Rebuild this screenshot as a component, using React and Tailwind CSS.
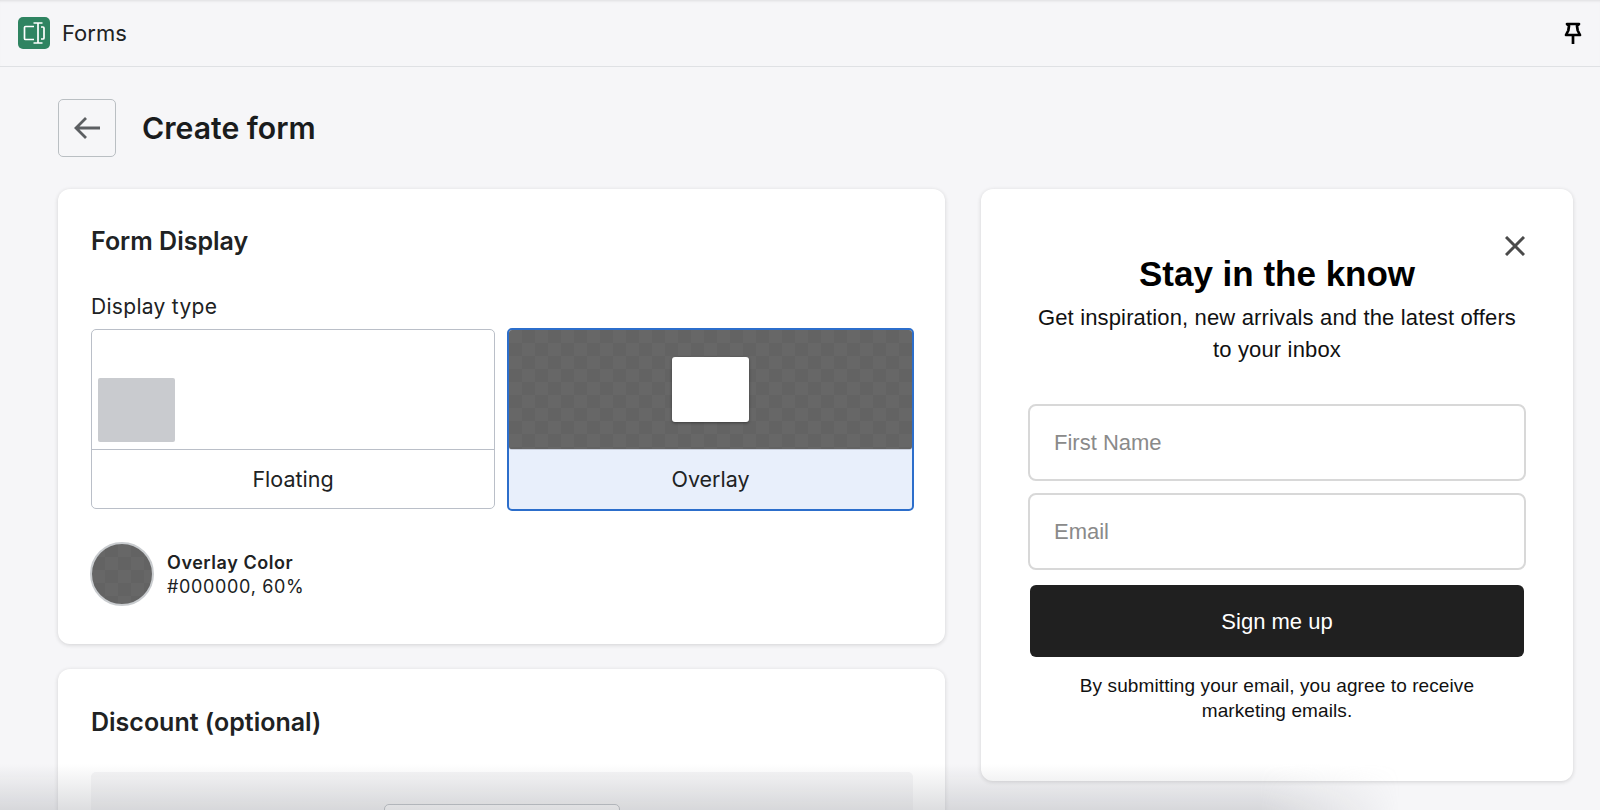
const checker = 'bg-[repeating-conic-gradient(#636363_0%_25%,#676767_0%_50%)] bg-[length:26px_26px]';

function Logo() {
  return (
    <div className="w-8 h-8 rounded-[5px] bg-[#2f8461]">
      <svg width="32" height="32" viewBox="0 0 32 32" fill="none" stroke="#fff" strokeWidth="1.7">
        <path d="M16 9.500H7.500a1 1 0 0 0-1 1v11a1 1 0 0 0 1 1H16" />
        <path d="M15.500 6h9M15.500 26h9M20 6v20" />
        <path d="M23 10h2a1 1 0 0 1 1 1v10a1 1 0 0 1-1 1h-2" />
      </svg>
    </div>
  );
}

function Pin() {
  return (
    <svg width="18" height="23" viewBox="0 0 18 23" fill="none" stroke="#000" strokeWidth="2.7" strokeLinejoin="round">
      <path d="M3 2h12l-2 2 .7 4.500L16 13H2l2.300-4.500L5 4z" />
      <path d="M9 13v9" />
    </svg>
  );
}

function DisplayOption({ label, selected }) {
  if (selected) {
    return (
      <div className="w-[407px] h-[183px] rounded-[5px] border-2 border-[#2c6ecb] bg-[#e8effb] overflow-hidden flex flex-col">
        <div className={`h-[120px] shrink-0 border-b border-[#c9cfdc] rounded-b-[3px] flex items-center justify-center ${checker}`}>
          <div className="w-[77px] h-[65px] bg-white rounded-[3px] shadow-[0_1px_3px_rgba(0,0,0,0.4)]"></div>
        </div>
        <div className="flex-1 flex items-center justify-center text-[21.500px] text-[#202223]">{label}</div>
      </div>
    );
  }
  return (
    <div className="w-[404px] h-[180px] mt-px rounded-[5px] border border-[#babfc8] bg-white overflow-hidden flex flex-col">
      <div className="h-[120px] shrink-0 border-b border-[#babfc8] flex items-end px-[6px] pb-[7px]">
        <div className="w-[77px] h-[64px] bg-[#c9cbcf] rounded-[2px]"></div>
      </div>
      <div className="flex-1 flex items-center justify-center text-[21.500px] text-[#202223]">{label}</div>
    </div>
  );
}

function FormDisplayCard() {
  return (
    <section className="bg-white rounded-[12px] shadow-[0_1px_4px_rgba(23,24,24,0.16)] pl-[33px] pr-[31px] pt-[38px] h-[455px]">
      <h2 className="text-[25px] leading-[28px] font-semibold text-[#202223]">Form Display</h2>
      <p className="mt-[39px] text-[21px] leading-[26px] tracking-[0.3px] text-[#202223]">Display type</p>
      <div className="mt-[8px] flex gap-[12px] items-start">
        <DisplayOption label="Floating" />
        <DisplayOption label="Overlay" selected />
      </div>
      <div className="mt-[31px] -ml-px flex items-center gap-[13px]">
        <div className={`w-[64px] h-[64px] rounded-full border-2 border-[#c9cccf] ${checker}`}></div>
        <div className="pt-[2px] text-[#202223]">
          <div className="text-[18px] leading-[24px] font-semibold tracking-[0.55px]">Overlay Color</div>
          <div className="text-[18px] leading-[24px] tracking-[0.65px]">#000000, 60%</div>
        </div>
      </div>
    </section>
  );
}

function DiscountCard() {
  return (
    <section className="mt-[25px] bg-white rounded-[12px] shadow-[0_1px_4px_rgba(23,24,24,0.16)] pl-[33px] pr-[32px] pt-[39px] h-[300px]">
      <h2 className="text-[25px] leading-[28px] font-semibold text-[#202223]">Discount (optional)</h2>
      <div className="mt-[36px] h-[160px] bg-[#f6f6f7] rounded-[5px] flex justify-center pt-[32px]">
        <div className="w-[236px] h-[44px] bg-white border border-[#babfc3] rounded-[5px]"></div>
      </div>
    </section>
  );
}

function PreviewCard() {
  return (
    <aside className="relative w-[592px] h-[592px] shrink-0 bg-white rounded-[12px] shadow-[0_1px_4px_rgba(23,24,24,0.16)] px-[47px] pt-[62px] font-['Liberation_Sans',Arial,sans-serif] text-black">
      <svg className="absolute right-[48px] top-[47px]" width="20" height="20" viewBox="0 0 20 20" stroke="#4a4a4a" strokeWidth="3" fill="none">
        <path d="M1 1l18 18M19 1L1 19" />
      </svg>
      <h2 className="text-center text-[35px] leading-[46px] font-bold">Stay in the know</h2>
      <p className="mt-[5px] -mx-[10px] text-center text-[22px] leading-[32px] tracking-[0.15px] text-[#111]">Get inspiration, new arrivals and the latest offers<br />to your inbox</p>
      <div className="mt-[38px] h-[77px] border-2 border-[#d8d8d8] rounded-[8px] px-[24px] flex items-center text-[22px] text-[#8a8a8a]">First Name</div>
      <div className="mt-[12px] h-[77px] border-2 border-[#d8d8d8] rounded-[8px] px-[24px] flex items-center text-[22px] text-[#8a8a8a]">Email</div>
      <button className="mt-[15px] mx-[2px] w-[494px] h-[72px] rounded-[6px] bg-[#202020] text-white text-[22px]">Sign me up</button>
      <p className="mt-[16px] -mx-[10px] text-center text-[19px] leading-[25px] tracking-[0.1px] text-[#111]">By submitting your email, you agree to receive<br />marketing emails.</p>
    </aside>
  );
}

export default function App() {
  return (
    <div className="relative h-[810px] overflow-hidden bg-[#f6f6f8] font-['Inter',sans-serif]">
      <header className="h-[67px] border-b border-[#dfe1e4] shadow-[inset_0_3px_3px_-2px_rgba(0,0,0,0.1)] pl-[18px] pr-[18px] flex items-center justify-between">
        <div className="flex items-center gap-[12px]">
          <Logo />
          <span className="text-[22px] text-[#202223]">Forms</span>
        </div>
        <Pin />
      </header>
      <main className="pl-[58px] pr-[27px]">
        <div className="pt-[32px] flex items-center gap-[26px]">
          <button className="w-[58px] h-[58px] rounded-[5px] border border-[#babfc3] flex items-center justify-center">
            <svg width="28" height="24" viewBox="0 0 28 24" fill="none" stroke="#5c5f62" strokeWidth="2.8">
              <path d="M27 12H3M13 2L3 12l10 10" />
            </svg>
          </button>
          <h1 className="text-[30.200px] leading-[36px] font-semibold text-[#1a1c1d]">Create form</h1>
        </div>
        <div className="mt-[32px] flex gap-[36px] items-start">
          <div className="w-[887px] shrink-0">
            <FormDisplayCard />
            <DiscountCard />
          </div>
          <PreviewCard />
        </div>
      </main>
      {/* screenshot fade along the bottom edge */}
      <div className="absolute left-0 bottom-0 w-[1400px] h-[46px] bg-gradient-to-b from-transparent to-[rgba(160,162,168,0.36)] [mask-image:linear-gradient(to_right,black_90%,transparent)]"></div>
    </div>
  );
}
